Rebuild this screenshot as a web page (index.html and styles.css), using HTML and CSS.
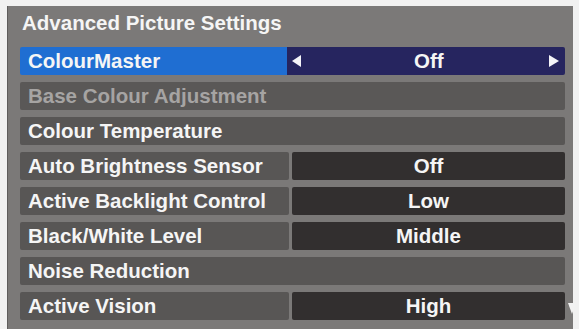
FILE: index.html
```html
<!DOCTYPE html>
<html>
<head>
<meta charset="utf-8">
<link rel="stylesheet" href="styles.css">
</head>
<body>
<div class="panel">
  <div class="title">Advanced Picture Settings</div>
  <div class="rows">
    <div class="row selected">
      <div class="label">ColourMaster</div>
      <div class="value">
        <svg class="arrow" width="9" height="12" viewBox="0 0 9 12"><polygon points="9,0 9,12 0,6" fill="#f4f4f8"/></svg>
        <span class="vtext">Off</span>
        <svg class="arrow" width="10" height="12" viewBox="0 0 10 12"><polygon points="0,0 0,12 10,6" fill="#f4f4f8"/></svg>
      </div>
    </div>
    <div class="row">
      <div class="label full disabled">Base Colour Adjustment</div>
    </div>
    <div class="row">
      <div class="label full">Colour Temperature</div>
    </div>
    <div class="row">
      <div class="label">Auto Brightness Sensor</div>
      <div class="value"><span class="vtext">Off</span></div>
    </div>
    <div class="row">
      <div class="label">Active Backlight Control</div>
      <div class="value"><span class="vtext">Low</span></div>
    </div>
    <div class="row">
      <div class="label">Black/White Level</div>
      <div class="value"><span class="vtext">Middle</span></div>
    </div>
    <div class="row">
      <div class="label full">Noise Reduction</div>
    </div>
    <div class="row">
      <div class="label">Active Vision</div>
      <div class="value"><span class="vtext">High</span></div>
    </div>
  </div>
  <svg class="scroll" width="8" height="11" viewBox="0 0 8 11"><polygon points="0,0 8,0 4,11" fill="#f2f2f2"/></svg>
</div>
</body>
</html>
```
FILE: styles.css
```css
html, body {
  margin: 0;
  padding: 0;
  background: #f1f1f1;
  overflow: hidden;
}
body {
  font-family: "Liberation Sans", Arial, sans-serif;
  font-weight: bold;
  color: #f5f5f5;
}
.panel {
  position: relative;
  margin: 6px 0 0 7px;
  width: 566px;
  height: 330px;
  box-sizing: border-box;
  background: #7b7978;
  border-left: 1px solid #5f5d5c;
  padding: 5px 0 0 12px;
}
.title {
  font-size: 20.5px;
  line-height: 24px;
  padding-left: 2px;
  margin-bottom: 12px;
}
.rows {
  display: flex;
  flex-direction: column;
  gap: 7px;
}
.row {
  display: flex;
  gap: 3px;
  height: 28px;
  width: 545px;
}
.label {
  width: 269px;
  background: #585655;
  border-radius: 2px;
  font-size: 20.5px;
  line-height: 28px;
  padding-left: 8px;
  box-sizing: border-box;
  white-space: nowrap;
}
.label.full {
  width: 545px;
}
.label.disabled {
  color: #a6a4a3;
  background: #5a5857;
}
.value {
  width: 273px;
  background: #322f2f;
  border-radius: 2px;
  font-size: 20.5px;
  line-height: 28px;
  display: flex;
  align-items: center;
  justify-content: center;
}
.row.selected {
  gap: 0;
}
.row.selected .label {
  width: 272px;
  background: #1f6ed2;
  border-radius: 2px 0 0 2px;
}
.row.selected .value {
  background: #26255f;
  border-radius: 0 2px 2px 0;
  justify-content: space-between;
  padding: 0 6px 0 5px;
}
.row.selected .vtext {
  margin-left: 8px;
}
.scroll {
  position: absolute;
  left: 560px;
  top: 297px;
}
```
